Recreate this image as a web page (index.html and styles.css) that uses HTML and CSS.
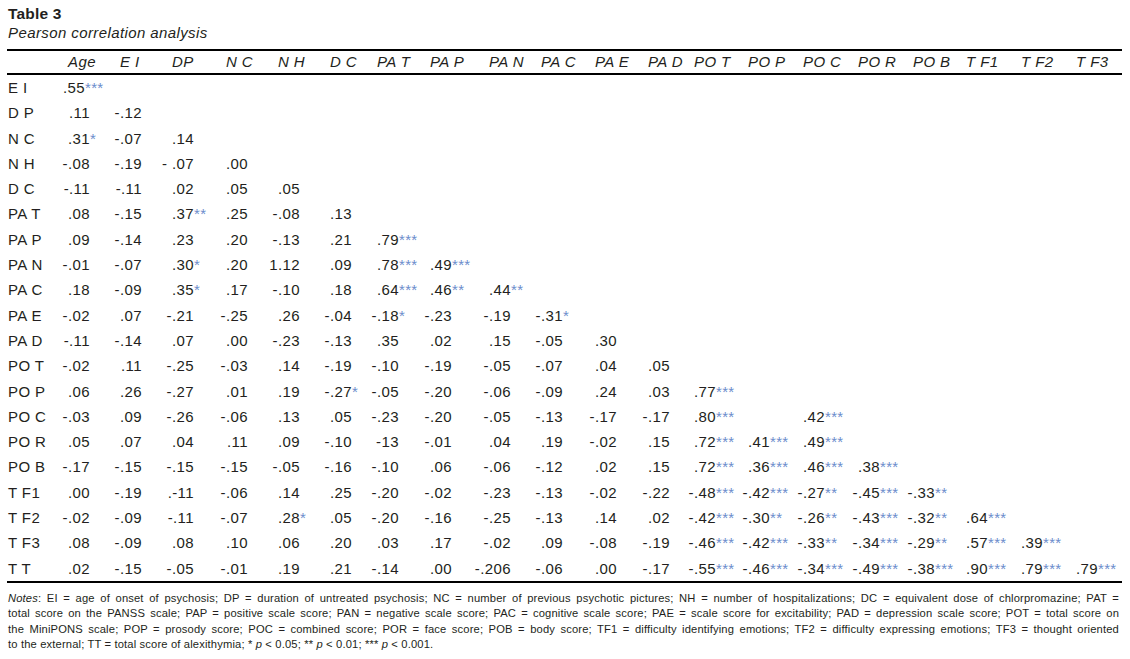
FILE: index.html
```html
<!DOCTYPE html>
<html lang="en">
<head>
<meta charset="utf-8">
<title>Table 3 - Pearson correlation analysis</title>
<link rel="stylesheet" href="styles.css">
</head>
<body>
<div class="page">
  <h1 class="title">Table 3</h1>
  <p class="subtitle">Pearson correlation analysis</p>
  <table class="corr">
    <colgroup>
      <col class="c-label">
      <col class="w30">
      <col class="w52"><col class="w52"><col class="w54"><col class="w52"><col class="w52">
      <col class="w47"><col class="w53"><col class="w59"><col class="w52"><col class="w54"><col class="w53">
      <col class="w46"><col class="w54"><col class="w55"><col class="w55"><col class="w55">
      <col class="w53"><col class="w55"><col class="w55">
      <col class="w24">
    </colgroup>
    <thead>
      <tr>
        <th class="lab"></th>
        <th><span>Age</span></th><th><span>E I</span></th><th><span>DP</span></th><th><span>N C</span></th><th><span>N H</span></th><th><span>D C</span></th>
        <th><span>PA T</span></th><th><span>PA P</span></th><th><span>PA N</span></th><th><span>PA C</span></th><th><span>PA E</span></th><th><span>PA D</span></th>
        <th><span>PO T</span></th><th><span>PO P</span></th><th><span>PO C</span></th><th><span>PO R</span></th><th><span>PO B</span></th>
        <th><span>T F1</span></th><th><span>T F2</span></th><th><span>T F3</span></th>
        <th></th>
      </tr>
    </thead>
    <tbody>
      <tr><td class="lab">E I</td><td class="shift">.55<span class="sig">***</span></td></tr>
      <tr><td class="lab">D P</td><td>.11</td><td>-.12</td></tr>
      <tr><td class="lab">N C</td><td>.31<span class="sig">*</span></td><td>-.07</td><td>.14</td></tr>
      <tr><td class="lab">N H</td><td>-.08</td><td>-.19</td><td>- .07</td><td>.00</td></tr>
      <tr><td class="lab">D C</td><td>-.11</td><td>-.11</td><td>.02</td><td>.05</td><td>.05</td></tr>
      <tr><td class="lab">PA T</td><td>.08</td><td>-.15</td><td>.37<span class="sig">**</span></td><td>.25</td><td>-.08</td><td>.13</td></tr>
      <tr><td class="lab">PA P</td><td>.09</td><td>-.14</td><td>.23</td><td>.20</td><td>-.13</td><td>.21</td><td>.79<span class="sig">***</span></td></tr>
      <tr><td class="lab">PA N</td><td>-.01</td><td>-.07</td><td>.30<span class="sig">*</span></td><td>.20</td><td>1.12</td><td>.09</td><td>.78<span class="sig">***</span></td><td>.49<span class="sig">***</span></td></tr>
      <tr><td class="lab">PA C</td><td>.18</td><td>-.09</td><td>.35<span class="sig">*</span></td><td>.17</td><td>-.10</td><td>.18</td><td>.64<span class="sig">***</span></td><td>.46<span class="sig">**</span></td><td>.44<span class="sig">**</span></td></tr>
      <tr><td class="lab">PA E</td><td>-.02</td><td>.07</td><td>-.21</td><td>-.25</td><td>.26</td><td>-.04</td><td>-.18<span class="sig">*</span></td><td>-.23</td><td>-.19</td><td>-.31<span class="sig">*</span></td></tr>
      <tr><td class="lab">PA D</td><td>-.11</td><td>-.14</td><td>.07</td><td>.00</td><td>-.23</td><td>-.13</td><td>.35</td><td>.02</td><td>.15</td><td>-.05</td><td>.30</td></tr>
      <tr><td class="lab">PO T</td><td>-.02</td><td>.11</td><td>-.25</td><td>-.03</td><td>.14</td><td>-.19</td><td>-.10</td><td>-.19</td><td>-.05</td><td>-.07</td><td>.04</td><td>.05</td></tr>
      <tr><td class="lab">PO P</td><td>.06</td><td>.26</td><td>-.27</td><td>.01</td><td>.19</td><td>-.27<span class="sig">*</span></td><td>-.05</td><td>-.20</td><td>-.06</td><td>-.09</td><td>.24</td><td>.03</td><td>.77<span class="sig">***</span></td></tr>
      <tr><td class="lab">PO C</td><td>-.03</td><td>.09</td><td>-.26</td><td>-.06</td><td>.13</td><td>.05</td><td>-.23</td><td>-.20</td><td>-.05</td><td>-.13</td><td>-.17</td><td>-.17</td><td>.80<span class="sig">***</span></td><td></td><td>.42<span class="sig">***</span></td></tr>
      <tr><td class="lab">PO R</td><td>.05</td><td>.07</td><td>.04</td><td>.11</td><td>.09</td><td>-.10</td><td>-13</td><td>-.01</td><td>.04</td><td>.19</td><td>-.02</td><td>.15</td><td>.72<span class="sig">***</span></td><td>.41<span class="sig">***</span></td><td>.49<span class="sig">***</span></td></tr>
      <tr><td class="lab">PO B</td><td>-.17</td><td>-.15</td><td>-.15</td><td>-.15</td><td>-.05</td><td>-.16</td><td>-.10</td><td>.06</td><td>-.06</td><td>-.12</td><td>.02</td><td>.15</td><td>.72<span class="sig">***</span></td><td>.36<span class="sig">***</span></td><td>.46<span class="sig">***</span></td><td>.38<span class="sig">***</span></td></tr>
      <tr><td class="lab">T F1</td><td>.00</td><td>-.19</td><td>.-11</td><td>-.06</td><td>.14</td><td>.25</td><td>-.20</td><td>-.02</td><td>-.23</td><td>-.13</td><td>-.02</td><td>-.22</td><td>-.48<span class="sig">***</span></td><td>-.42<span class="sig">***</span></td><td>-.27<span class="sig">**</span></td><td>-.45<span class="sig">***</span></td><td>-.33<span class="sig">**</span></td></tr>
      <tr><td class="lab">T F2</td><td>-.02</td><td>-.09</td><td>-.11</td><td>-.07</td><td>.28<span class="sig">*</span></td><td>.05</td><td>-.20</td><td>-.16</td><td>-.25</td><td>-.13</td><td>.14</td><td>.02</td><td>-.42<span class="sig">***</span></td><td>-.30<span class="sig">**</span></td><td>-.26<span class="sig">**</span></td><td>-.43<span class="sig">***</span></td><td>-.32<span class="sig">**</span></td><td>.64<span class="sig">***</span></td></tr>
      <tr><td class="lab">T F3</td><td>.08</td><td>-.09</td><td>.08</td><td>.10</td><td>.06</td><td>.20</td><td>.03</td><td>.17</td><td>-.02</td><td>.09</td><td>-.08</td><td>-.19</td><td>-.46<span class="sig">***</span></td><td>-.42<span class="sig">***</span></td><td>-.33<span class="sig">**</span></td><td>-.34<span class="sig">***</span></td><td>-.29<span class="sig">**</span></td><td>.57<span class="sig">***</span></td><td>.39<span class="sig">***</span></td></tr>
      <tr><td class="lab">T T</td><td>.02</td><td>-.15</td><td>-.05</td><td>-.01</td><td>.19</td><td>.21</td><td>-.14</td><td>.00</td><td>-.206</td><td>-.06</td><td>.00</td><td>-.17</td><td>-.55<span class="sig">***</span></td><td>-.46<span class="sig">***</span></td><td>-.34<span class="sig">***</span></td><td>-.49<span class="sig">***</span></td><td>-.38<span class="sig">***</span></td><td>.90<span class="sig">***</span></td><td>.79<span class="sig">***</span></td><td>.79<span class="sig">***</span></td></tr>
    </tbody>
  </table>
  <div class="notes">
    <span class="line"><em>Notes</em>: EI = age of onset of psychosis; DP = duration of untreated psychosis; NC = number of previous psychotic pictures; NH = number of hospitalizations; DC = equivalent dose of chlorpromazine; PAT =</span>
    <span class="line">total score on the PANSS scale; PAP = positive scale score; PAN = negative scale score; PAC = cognitive scale score; PAE = scale score for excitability; PAD = depression scale score; POT = total score on</span>
    <span class="line">the MiniPONS scale; POP = prosody score; POC = combined score; POR = face score; POB = body score; TF1 = difficulty identifying emotions; TF2 = difficulty expressing emotions; TF3 = thought oriented</span>
    <span class="line last">to the external; TT = total score of alexithymia; * <em>p</em> &lt; 0.05; ** <em>p</em> &lt; 0.01; *** <em>p</em> &lt; 0.001.</span>
  </div>
</div>
</body>
</html>
```

FILE: styles.css
```css
html, body {
  margin: 0;
  padding: 0;
  background: #ffffff;
}

body {
  font-family: "Liberation Sans", Arial, sans-serif;
  color: #231f20;
}

.page {
  padding: 4px 0 0 7px;
}

.title {
  margin: 0;
  padding-left: 1px;
  font-size: 15.5px;
  line-height: 19px;
  font-weight: bold;
  letter-spacing: 0.2px;
}

.subtitle {
  margin: 0 0 7px 0;
  padding-left: 1px;
  font-size: 15px;
  line-height: 19px;
  font-style: italic;
  letter-spacing: 0.4px;
}

.corr {
  border-collapse: separate;
  border-spacing: 0;
  table-layout: fixed;
  width: 1115px;
  border-top: 2px solid #000;
  border-bottom: 2px solid #000;
  font-size: 15px;
  letter-spacing: 0.4px;
}

.c-label { width: 53px; }
.w24 { width: 24px; }
.w30 { width: 30px; }
.w46 { width: 46px; }
.w47 { width: 47px; }
.w52 { width: 52px; }
.w53 { width: 53px; }
.w54 { width: 54px; }
.w55 { width: 55px; }
.w59 { width: 59px; }

.corr th {
  height: 22px;
  padding: 0;
  line-height: 22px;
  font-weight: normal;
  font-style: italic;
  text-align: right;
  white-space: nowrap;
  border-bottom: 2px solid #000;
}

.corr th span {
  display: inline-block;
  width: 22px;
  text-align: left;
  white-space: nowrap;
}

.corr td {
  height: 25.3px;
  padding: 0;
  line-height: 25.3px;
  text-align: right;
  white-space: nowrap;
  vertical-align: top;
}

.corr .lab {
  text-align: left;
  padding-left: 1px;
  font-style: normal;
}

.corr td.shift {
  padding-right: 5px;
}

.sig {
  display: inline-block;
  width: 0;
  text-align: left;
  white-space: nowrap;
  color: #6d8dcc;
  letter-spacing: 0.3px;
}

.notes {
  width: 1111px;
  margin-top: 8px;
  padding-left: 1px;
  font-size: 11.2px;
  line-height: 15.4px;
  letter-spacing: 0.15px;
}

.notes .line {
  display: block;
  text-align: justify;
  text-align-last: justify;
  white-space: nowrap;
}

.notes .line.last {
  text-align: left;
  text-align-last: left;
}

.notes em {
  font-style: italic;
}
```
